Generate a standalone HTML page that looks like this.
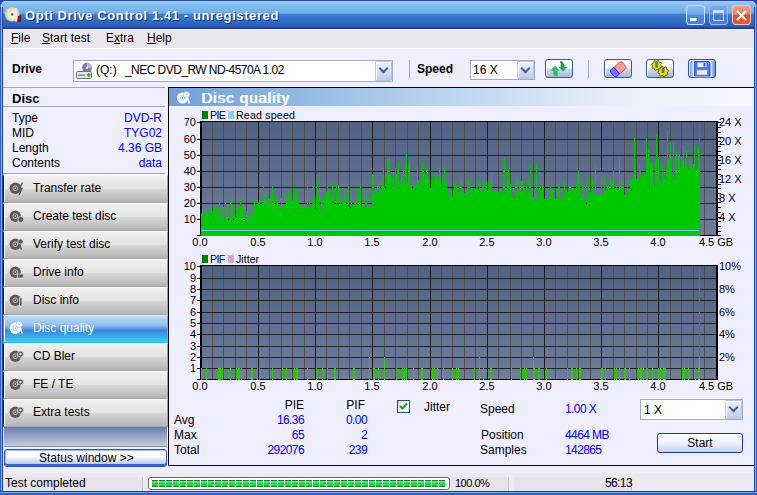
<!DOCTYPE html><html><head><meta charset="utf-8"><style>
*{margin:0;padding:0;box-sizing:border-box}
html,body{width:757px;height:495px;overflow:hidden;background:#ffffff}
body{font-family:"Liberation Sans",sans-serif;font-size:12px;color:#000;position:relative;line-height:14px}
.abs{position:absolute}
.lbl{position:absolute;white-space:nowrap}
#win{position:absolute;left:0;top:0;width:757px;height:495px;background:#2048a8;overflow:hidden}
#title{position:absolute;left:0;top:0;width:757px;height:29px;border-radius:8px 8px 0 0;
 background:linear-gradient(to bottom,#2a4aa0 0px,#2a4aa0 1px,#a4d0f6 1px,#8cc4f2 3px,#72b0ec 12px,#62a0e4 13.5px,#3a80d4 14px,#2f6cc6 21px,#2a5cb8 27px,#1a3a94 28px,#1a3a94 29px)}
#ttext{position:absolute;left:25px;top:9px;font-weight:bold;font-size:13px;color:#fff;letter-spacing:0.6px;text-shadow:1px 1px 0 #102c80;white-space:nowrap}
.wbtn{position:absolute;top:5px;width:19px;height:20px;border-radius:3px;border:1px solid #f0f4ff}
#lb{position:absolute;left:0;top:7px;width:3px;height:488px;background:linear-gradient(to right,#3060c8 0,#3060c8 1px,#80b0e8 1px,#80b0e8 2px,#2048a0 2px)}
#rb{position:absolute;left:754px;top:7px;width:3px;height:488px;background:linear-gradient(to right,#1e48a0 0,#1e48a0 1px,#80b0e8 1px,#80b0e8 2px,#3060c8 2px)}
#bb{position:absolute;left:0;top:491px;width:757px;height:4px;background:linear-gradient(#203c98 0,#203c98 1px,#7aaae8 1px,#7aaae8 2px,#3060c8 2px)}
#client{position:absolute;left:3px;top:29px;width:751px;height:462px;background:#efeeff}
#menu{position:absolute;left:3px;top:29px;width:751px;height:20px;background:#eae8ec;border-top:1px solid #f6f4f4;border-bottom:1px solid #ffffff}
.mi{position:absolute;top:31px;white-space:nowrap}
.u{text-decoration:underline;text-underline-offset:1px}
.combo{position:absolute;background:#fff;border:1px solid #a5acb5}
.dd{position:absolute;top:0;right:0;width:17px;bottom:0;background:linear-gradient(#eef4fe 0%,#d8e4f8 40%,#bccfeb 100%);border:1px solid #b8c8e4;box-shadow:inset 1px 1px 0 #fff;border-radius:1px}
.dd:after{content:"";position:absolute;left:3.5px;top:2.5px;width:5px;height:5px;border-right:2px solid #4d6185;border-bottom:2px solid #4d6185;transform:rotate(45deg)}
.tb{position:absolute;top:59px;width:28px;height:19px;border:1px solid #3a5a90;border-radius:3px;background:linear-gradient(#ffffff 0%,#f4f8fc 45%,#cfdaea 55%,#a8b8d4 100%);box-shadow:inset 1px 1px 0 #fff}
.tb svg{position:absolute;left:0;top:0}
.sep{position:absolute;width:1px;background:#a8a8b0}
.hline{position:absolute;height:1px}
.sb{position:absolute;left:3px;width:165px;height:28px;border-top:1px solid #fafafa;border-bottom:1px solid #a4a4a4;border-left:1px solid #1a1a1a;border-right:1px solid #a0a0a0;box-shadow:inset 1px 0 0 #ffffff;
 background:linear-gradient(#f0f0f0 0%,#e4e4e4 48%,#d6d6d6 52%,#b6b6b6 100%)}
.sb.sel{background:linear-gradient(#c0dcf8 0%,#90bef0 35%,#5a96e0 50%,#3a84d8 55%,#30d4fa 100%);color:#fff;border-top-color:#d8ecff;border-bottom-color:#28b8ec;border-left-color:#4a88d0}
.sb .ic{position:absolute;left:5px;top:5px;width:16px;height:15px}
.sb .ic svg{display:block}
.sb .sbt{position:absolute;left:29px;top:5px;white-space:nowrap}
.yl{position:absolute;left:150px;width:46px;text-align:right;font-size:11px;line-height:14px}
.yr{position:absolute;left:719px;font-size:11px;line-height:14px;white-space:nowrap}
.xl{position:absolute;width:60px;text-align:center;font-size:11px;line-height:14px}
.blue{color:#0000ff}
.num{letter-spacing:-0.6px}
.leg{position:absolute;font-size:10.7px;line-height:12px;white-space:nowrap}
.sbar{position:absolute;top:477px;height:14px;background:#e6e4e8;border-right:1px solid #c8c8cc}
</style></head><body><div id="win"><div id="title"></div><div id="client"></div><div id="lb"></div><div id="rb"></div><div id="bb"></div></div><svg class="abs" style="left:4px;top:6px" width="18" height="18" viewBox="0 0 18 18"><circle cx="8.2" cy="8.4" r="7.2" fill="#e6d49a"/><circle cx="8.2" cy="8.4" r="5" fill="#f2e8c0"/><circle cx="8.2" cy="8.4" r="2.6" fill="#f8f8f0"/><circle cx="8.2" cy="8.4" r="1.3" fill="#2e6cd0"/><path d="M10.5 2.5 L13 2 L13 15.5 L10.8 15.5 Z" fill="#e8e8e8"/><rect x="13.8" y="10" width="2" height="6" fill="#a00808"/><rect x="15.8" y="9" width="1" height="7" fill="#302020"/></svg><div id="ttext">Opti Drive Control 1.41 - unregistered</div><div class="wbtn" style="left:686px;border-color:#d0e2fa;background:linear-gradient(#8cbcf4 0%,#74a8ee 45%,#4f88e0 52%,#4a80dc 100%)"><div class="abs" style="left:3px;top:12px;width:7px;height:3px;background:#fff"></div></div><div class="wbtn" style="left:709px;border-color:#9cbcec;background:linear-gradient(#78a8ec 0%,#6898e4 45%,#4278d4 52%,#4a7cd0 100%)"><div class="abs" style="left:3px;top:4px;width:11px;height:11px;border:1px solid #c8dcf8;border-top-width:3px"></div></div><div class="wbtn" style="left:732px;border-color:#f4c8b8;background:linear-gradient(#eca080 0%,#e4866a 45%,#d85428 52%,#dc6038 100%)"><svg class="abs" style="left:3px;top:4px" width="11" height="11" viewBox="0 0 11 11"><path d="M1 1L10 10M10 1L1 10" stroke="#fff" stroke-width="2"/></svg></div><div id="menu"></div><div class="mi" style="left:11px"><span class="u">F</span>ile</div><div class="mi" style="left:42px"><span class="u">S</span>tart test</div><div class="mi" style="left:106px">E<span class="u">x</span>tra</div><div class="mi" style="left:147px"><span class="u">H</span>elp</div><div class="lbl" style="left:12px;top:62px;font-weight:bold">Drive</div><div class="combo" style="left:73px;top:60px;width:320px;height:22px"><div class="dd"></div></div><svg class="abs" style="left:75px;top:62px" width="18" height="18" viewBox="0 0 18 18"><circle cx="12" cy="5.8" r="5" fill="#8878b8"/><path d="M12 0.8 A5 5 0 0 1 17 5.8 L12 5.8Z" fill="#c0b4e4"/><circle cx="12" cy="5.8" r="1.2" fill="#fff"/><rect x="1.5" y="9.5" width="15" height="7" rx="1" fill="#e4e4e4" stroke="#707070" stroke-width="1"/><rect x="3" y="12.5" width="7" height="1.5" fill="#909090"/><path d="M13 11 h1.5 v1.2 h1.2 v1.5 h-1.2 v1.2 h-1.5 v-1.2 h-1.2 v-1.5 h1.2z" fill="#10c010"/></svg><div class="lbl" style="left:96px;top:63px">(Q:)</div><div class="lbl" style="left:125px;top:63px;letter-spacing:-0.55px">_NEC DVD_RW ND-4570A 1.02</div><div class="sep" style="left:409px;top:60px;height:18px"></div><div class="lbl" style="left:417px;top:62px;font-weight:bold">Speed</div><div class="combo" style="left:470px;top:60px;width:65px;height:20px"><div class="dd"></div></div><div class="lbl" style="left:473px;top:63px">16 X</div><div class="sep" style="left:588px;top:60px;height:18px"></div><div class="tb" style="left:545px"><svg width="28" height="19" viewBox="0 0 28 19"><path d="M4.6 10.8 L9 5.5 L13.4 10.8 L11.3 10.8 L11.9 16 L7.9 16 L7.1 10.8 Z" fill="#2cbc6c"/><path d="M12.6 7 L21.4 7 L17 11.8 Z" fill="#22ac5c"/><path d="M14.6 7.2 L18.6 7.2 Q18.6 3 15 0.8 L13.8 1.8 Q15.4 4 14.6 7.2 Z" fill="#1c9850"/></svg></div><div class="tb" style="left:604px"><svg width="28" height="19" viewBox="0 0 28 19"><g transform="translate(13.6 9) rotate(-40)"><rect x="-2.5" y="-4.4" width="9.6" height="8.8" rx="1.8" fill="#ff9c9c" stroke="#ff3a3a" stroke-width="0.9"/><path d="M-2.5 -4.4 L-6.3 -4.4 Q-8.2 -4.4 -8.2 -2.5 L-8.2 2.5 Q-8.2 4.4 -6.3 4.4 L-2.5 4.4 Z" fill="#7474f4" stroke="#2424ff" stroke-width="0.9"/></g></svg></div><div class="tb" style="left:646px"><svg width="28" height="19" viewBox="0 0 28 19"><path d="M14.90 6.43 L14.60 7.41 L13.20 7.69 L12.69 8.31 L12.67 9.73 L11.77 10.21 L10.59 9.42 L9.79 9.50 L8.77 10.50 L7.79 10.20 L7.51 8.80 L6.89 8.29 L5.47 8.27 L4.99 7.37 L5.78 6.19 L5.70 5.39 L4.70 4.37 L5.00 3.39 L6.40 3.11 L6.91 2.49 L6.93 1.07 L7.83 0.59 L9.01 1.38 L9.81 1.30 L10.83 0.30 L11.81 0.60 L12.09 2.00 L12.71 2.51 L14.13 2.53 L14.61 3.43 L13.82 4.61 L13.90 5.41Z" fill="#e4e400" stroke="#3a3a00" stroke-width="0.7"/><path d="M20.94 14.19 L20.34 15.06 L18.90 14.95 L18.19 15.41 L17.72 16.78 L16.68 16.98 L15.74 15.88 L14.91 15.70 L13.61 16.34 L12.74 15.74 L12.85 14.30 L12.39 13.59 L11.02 13.12 L10.82 12.08 L11.92 11.14 L12.10 10.31 L11.46 9.01 L12.06 8.14 L13.50 8.25 L14.21 7.79 L14.68 6.42 L15.72 6.22 L16.66 7.32 L17.49 7.50 L18.79 6.86 L19.66 7.46 L19.55 8.90 L20.01 9.61 L21.38 10.08 L21.58 11.12 L20.48 12.06 L20.30 12.89Z" fill="#e4e400" stroke="#3a3a00" stroke-width="0.7"/><rect x="8.3" y="1.5" width="2.6" height="6" fill="#6a6a90"/><rect x="14.8" y="7.5" width="2.6" height="5.5" fill="#6a6a90"/></svg></div><div class="tb" style="left:688px;border-color:#2050c0;background:linear-gradient(to right,#5a86e0 0%,#fff 22%,#fff 78%,#5a86e0 100%)"><svg width="28" height="19" viewBox="0 0 28 19"><rect x="4" y="0.3" width="18.5" height="17" rx="2" fill="#ffffff"/><path d="M5.5 1.5 H19.5 L21 3 V16 H5.5 Z" fill="#4a7cf4" stroke="#1050e8" stroke-width="1"/><rect x="8.5" y="2.5" width="9" height="4.5" fill="#f2eee0"/><rect x="14.5" y="3" width="2" height="3.5" fill="#2050e8"/><rect x="7" y="9.5" width="12" height="6" fill="#948c7c"/><rect x="8" y="10.3" width="10" height="4.4" fill="#eeeeee"/></svg></div><div class="hline" style="left:3px;top:87px;width:162px;background:#a8a8ac"></div><div class="lbl" style="left:12px;top:92px;font-weight:bold;font-size:13px">Disc</div><div class="hline" style="left:3px;top:106px;width:162px;background:#a8a8ac"></div><div class="lbl" style="left:12px;top:111px">Type</div><div class="lbl blue" style="left:60px;width:102px;text-align:right;top:111px">DVD-R</div><div class="lbl" style="left:12px;top:126px">MID</div><div class="lbl blue" style="left:60px;width:102px;text-align:right;top:126px">TYG02</div><div class="lbl" style="left:12px;top:141px">Length</div><div class="lbl blue" style="left:60px;width:102px;text-align:right;top:141px">4.36 GB</div><div class="lbl" style="left:12px;top:156px">Contents</div><div class="lbl blue" style="left:60px;width:102px;text-align:right;top:156px">data</div><div class="hline" style="left:3px;top:173px;width:162px;background:#a8a8ac"></div><div class="sb" style="top:175px"><span class="ic"><svg width="16" height="15" viewBox="0 0 16 15"><circle cx="6.3" cy="7.2" r="5.7" fill="#5a5a5a"/><circle cx="6.3" cy="7.2" r="2.4" fill="none" stroke="#bdbdbd" stroke-width="1"/><circle cx="6.3" cy="7.2" r="0.9" fill="#bdbdbd"/><path d="M13.5 1.5 L10.5 7.5 L13 7.5 L10 14" stroke="#5a5a5a" stroke-width="1.4" fill="none"/></svg></span><span class="sbt">Transfer rate</span></div><div class="sb" style="top:203px"><span class="ic"><svg width="16" height="15" viewBox="0 0 16 15"><circle cx="6.3" cy="7.2" r="5.7" fill="#5a5a5a"/><circle cx="6.3" cy="7.2" r="2.4" fill="none" stroke="#bdbdbd" stroke-width="1"/><circle cx="6.3" cy="7.2" r="0.9" fill="#bdbdbd"/><circle cx="11.8" cy="10.5" r="3" fill="#5a5a5a" stroke="#dcdcdc" stroke-width="0.8"/></svg></span><span class="sbt">Create test disc</span></div><div class="sb" style="top:231px"><span class="ic"><svg width="16" height="15" viewBox="0 0 16 15"><circle cx="6.3" cy="7.2" r="5.7" fill="#5a5a5a"/><circle cx="6.3" cy="7.2" r="2.4" fill="none" stroke="#bdbdbd" stroke-width="1"/><circle cx="6.3" cy="7.2" r="0.9" fill="#bdbdbd"/><circle cx="11.5" cy="4.5" r="2.6" fill="#5a5a5a" stroke="#dcdcdc" stroke-width="0.8"/><path d="M10.5 8 L12.5 12.5" stroke="#5a5a5a" stroke-width="1.6"/></svg></span><span class="sbt">Verify test disc</span></div><div class="sb" style="top:259px"><span class="ic"><svg width="16" height="15" viewBox="0 0 16 15"><circle cx="6.3" cy="7.2" r="5.7" fill="#5a5a5a"/><circle cx="6.3" cy="7.2" r="2.4" fill="none" stroke="#bdbdbd" stroke-width="1"/><circle cx="6.3" cy="7.2" r="0.9" fill="#bdbdbd"/><rect x="8.5" y="9" width="6" height="4" fill="#5a5a5a" stroke="#dcdcdc" stroke-width="0.8"/></svg></span><span class="sbt">Drive info</span></div><div class="sb" style="top:287px"><span class="ic"><svg width="16" height="15" viewBox="0 0 16 15"><circle cx="6.3" cy="7.2" r="5.7" fill="#5a5a5a"/><circle cx="6.3" cy="7.2" r="2.4" fill="none" stroke="#bdbdbd" stroke-width="1"/><circle cx="6.3" cy="7.2" r="0.9" fill="#bdbdbd"/><rect x="10.5" y="5" width="2.5" height="8" fill="#5a5a5a" stroke="#dcdcdc" stroke-width="0.8"/></svg></span><span class="sbt">Disc info</span></div><div class="sb sel" style="top:315px"><span class="ic"><svg width="16" height="15" viewBox="0 0 16 15"><circle cx="6.3" cy="7.2" r="5.7" fill="#ffffff"/><circle cx="6.3" cy="7.2" r="2.4" fill="none" stroke="#9cc4f0" stroke-width="1"/><circle cx="6.3" cy="7.2" r="0.9" fill="#9cc4f0"/><path d="M10.8 6 L13.3 12.5" stroke="#ffffff" stroke-width="1.8"/><circle cx="10.3" cy="3.5" r="3.1" fill="#ffffff" stroke="#9cc4f0" stroke-width="0.6"/><path d="M8.6 3.5 L9.6 2.5 L10.6 4 L11.6 2.5" stroke="#9cc4f0" stroke-width="0.7" fill="none"/></svg></span><span class="sbt">Disc quality</span></div><div class="sb" style="top:343px"><span class="ic"><svg width="16" height="15" viewBox="0 0 16 15"><circle cx="6.3" cy="7.2" r="5.7" fill="#5a5a5a"/><circle cx="6.3" cy="7.2" r="2.4" fill="none" stroke="#bdbdbd" stroke-width="1"/><circle cx="6.3" cy="7.2" r="0.9" fill="#bdbdbd"/><circle cx="11.5" cy="5" r="3" fill="#5a5a5a" stroke="#dcdcdc" stroke-width="0.8"/><circle cx="11.5" cy="5" r="1.2" fill="#dcdcdc"/></svg></span><span class="sbt">CD Bler</span></div><div class="sb" style="top:371px"><span class="ic"><svg width="16" height="15" viewBox="0 0 16 15"><circle cx="6.3" cy="7.2" r="5.7" fill="#5a5a5a"/><circle cx="6.3" cy="7.2" r="2.4" fill="none" stroke="#bdbdbd" stroke-width="1"/><circle cx="6.3" cy="7.2" r="0.9" fill="#bdbdbd"/><circle cx="11.5" cy="5" r="3" fill="#5a5a5a" stroke="#dcdcdc" stroke-width="0.8"/><circle cx="11.5" cy="5" r="1.2" fill="#dcdcdc"/></svg></span><span class="sbt">FE / TE</span></div><div class="sb" style="top:399px"><span class="ic"><svg width="16" height="15" viewBox="0 0 16 15"><circle cx="6.3" cy="7.2" r="5.7" fill="#5a5a5a"/><circle cx="6.3" cy="7.2" r="2.4" fill="none" stroke="#bdbdbd" stroke-width="1"/><circle cx="6.3" cy="7.2" r="0.9" fill="#bdbdbd"/><circle cx="11.5" cy="5" r="3" fill="#5a5a5a" stroke="#dcdcdc" stroke-width="0.8"/><circle cx="11.5" cy="5" r="1.2" fill="#dcdcdc"/></svg></span><span class="sbt">Extra tests</span></div><div class="abs" style="left:4px;top:427px;width:163px;height:19px;background:linear-gradient(#6a7cb0,#c4cae2)"></div><div class="hline" style="left:4px;top:446px;width:163px;background:#909098"></div><div class="abs" style="left:4px;top:449px;width:163px;height:18px;border:1px solid #2a56bc;border-radius:3px;background:linear-gradient(#ffffff 0%,#ffffff 40%,#dce6f4 60%,#a8c0e4 100%);box-shadow:inset 0 -2px 0 #3a68c8, inset 1px 1px 0 #9cc0f0"></div><div class="lbl" style="left:39px;top:451px">Status window &gt;&gt;</div><div class="abs" style="left:168px;top:87px;width:586px;height:379px;border:1px solid #000;border-right:none"></div><div class="abs" style="left:169px;top:88px;width:583px;height:18px;background:linear-gradient(to right,#6ea0d8,#a8c8ea 35%,#e6eef8 75%,#f6f8fe)"></div><svg class="abs" style="left:176px;top:91px" width="16" height="15" viewBox="0 0 16 15"><circle cx="6.5" cy="7" r="5.6" fill="#fff"/><circle cx="6.5" cy="7" r="2.2" fill="none" stroke="#8ab8e8" stroke-width="0.9"/><circle cx="6.5" cy="7" r="0.9" fill="#6aa0dc"/><path d="M11 6 L13.5 12.5" stroke="#fff" stroke-width="1.8"/><circle cx="10.5" cy="3.5" r="3.1" fill="#fff" stroke="#8ab8e8" stroke-width="0.6"/><path d="M8.8 3.5 L9.8 2.5 L10.8 4 L11.8 2.5" stroke="#9cc4ec" stroke-width="0.7" fill="none"/></svg><div class="lbl" style="left:201px;top:89px;font-size:15px;line-height:18px;color:#fff;letter-spacing:1px;text-shadow:1px 0 0 #fff">Disc quality</div><div class="abs" style="left:202px;top:111px;width:6px;height:8px;background:#008000"></div><div class="leg" style="left:210px;top:109px;letter-spacing:-0.7px">PIE</div><div class="abs" style="left:228px;top:111px;width:6px;height:8px;background:#87cefa"></div><div class="leg" style="left:236px;top:109px;letter-spacing:0.15px">Read speed</div><div class="abs" style="left:202px;top:255px;width:6px;height:8px;background:#008000"></div><div class="leg" style="left:210px;top:253px;letter-spacing:-0.7px">PIF</div><div class="abs" style="left:228px;top:255px;width:6px;height:8px;background:#d8a0d8"></div><div class="leg" style="left:236px;top:253px">Jitter</div><svg width="757" height="495" viewBox="0 0 757 495" style="position:absolute;left:0;top:0" shape-rendering="crispEdges"><defs><linearGradient id="pg" x1="0" y1="0" x2="0" y2="1"><stop offset="0" stop-color="#516181"/><stop offset="1" stop-color="#6e7d9c"/></linearGradient></defs><rect x="202" y="122" width="514" height="113" fill="url(#pg)"/><rect x="212" y="122" width="1" height="113" fill="#505050"/><rect x="223" y="122" width="1" height="113" fill="#505050"/><rect x="235" y="122" width="1" height="113" fill="#505050"/><rect x="246" y="122" width="1" height="113" fill="#505050"/><rect x="258" y="122" width="1" height="113" fill="#1e1e1e"/><rect x="269" y="122" width="1" height="113" fill="#505050"/><rect x="281" y="122" width="1" height="113" fill="#505050"/><rect x="292" y="122" width="1" height="113" fill="#505050"/><rect x="304" y="122" width="1" height="113" fill="#505050"/><rect x="315" y="122" width="1" height="113" fill="#1e1e1e"/><rect x="326" y="122" width="1" height="113" fill="#505050"/><rect x="338" y="122" width="1" height="113" fill="#505050"/><rect x="349" y="122" width="1" height="113" fill="#505050"/><rect x="361" y="122" width="1" height="113" fill="#505050"/><rect x="372" y="122" width="1" height="113" fill="#1e1e1e"/><rect x="384" y="122" width="1" height="113" fill="#505050"/><rect x="395" y="122" width="1" height="113" fill="#505050"/><rect x="407" y="122" width="1" height="113" fill="#505050"/><rect x="418" y="122" width="1" height="113" fill="#505050"/><rect x="430" y="122" width="1" height="113" fill="#1e1e1e"/><rect x="441" y="122" width="1" height="113" fill="#505050"/><rect x="452" y="122" width="1" height="113" fill="#505050"/><rect x="464" y="122" width="1" height="113" fill="#505050"/><rect x="475" y="122" width="1" height="113" fill="#505050"/><rect x="487" y="122" width="1" height="113" fill="#1e1e1e"/><rect x="498" y="122" width="1" height="113" fill="#505050"/><rect x="510" y="122" width="1" height="113" fill="#505050"/><rect x="521" y="122" width="1" height="113" fill="#505050"/><rect x="533" y="122" width="1" height="113" fill="#505050"/><rect x="544" y="122" width="1" height="113" fill="#1e1e1e"/><rect x="555" y="122" width="1" height="113" fill="#505050"/><rect x="567" y="122" width="1" height="113" fill="#505050"/><rect x="578" y="122" width="1" height="113" fill="#505050"/><rect x="590" y="122" width="1" height="113" fill="#505050"/><rect x="601" y="122" width="1" height="113" fill="#1e1e1e"/><rect x="613" y="122" width="1" height="113" fill="#505050"/><rect x="624" y="122" width="1" height="113" fill="#505050"/><rect x="636" y="122" width="1" height="113" fill="#505050"/><rect x="647" y="122" width="1" height="113" fill="#505050"/><rect x="658" y="122" width="1" height="113" fill="#1e1e1e"/><rect x="670" y="122" width="1" height="113" fill="#505050"/><rect x="681" y="122" width="1" height="113" fill="#505050"/><rect x="693" y="122" width="1" height="113" fill="#505050"/><rect x="704" y="122" width="1" height="113" fill="#505050"/><rect x="202" y="139" width="514" height="1" fill="#222222"/><rect x="202" y="155" width="514" height="1" fill="#222222"/><rect x="202" y="171" width="514" height="1" fill="#222222"/><rect x="202" y="187" width="514" height="1" fill="#222222"/><rect x="202" y="203" width="514" height="1" fill="#222222"/><rect x="202" y="219" width="514" height="1" fill="#222222"/><rect x="202" y="266" width="514" height="113" fill="url(#pg)"/><rect x="212" y="266" width="1" height="113" fill="#505050"/><rect x="223" y="266" width="1" height="113" fill="#505050"/><rect x="235" y="266" width="1" height="113" fill="#505050"/><rect x="246" y="266" width="1" height="113" fill="#505050"/><rect x="258" y="266" width="1" height="113" fill="#1e1e1e"/><rect x="269" y="266" width="1" height="113" fill="#505050"/><rect x="281" y="266" width="1" height="113" fill="#505050"/><rect x="292" y="266" width="1" height="113" fill="#505050"/><rect x="304" y="266" width="1" height="113" fill="#505050"/><rect x="315" y="266" width="1" height="113" fill="#1e1e1e"/><rect x="326" y="266" width="1" height="113" fill="#505050"/><rect x="338" y="266" width="1" height="113" fill="#505050"/><rect x="349" y="266" width="1" height="113" fill="#505050"/><rect x="361" y="266" width="1" height="113" fill="#505050"/><rect x="372" y="266" width="1" height="113" fill="#1e1e1e"/><rect x="384" y="266" width="1" height="113" fill="#505050"/><rect x="395" y="266" width="1" height="113" fill="#505050"/><rect x="407" y="266" width="1" height="113" fill="#505050"/><rect x="418" y="266" width="1" height="113" fill="#505050"/><rect x="430" y="266" width="1" height="113" fill="#1e1e1e"/><rect x="441" y="266" width="1" height="113" fill="#505050"/><rect x="452" y="266" width="1" height="113" fill="#505050"/><rect x="464" y="266" width="1" height="113" fill="#505050"/><rect x="475" y="266" width="1" height="113" fill="#505050"/><rect x="487" y="266" width="1" height="113" fill="#1e1e1e"/><rect x="498" y="266" width="1" height="113" fill="#505050"/><rect x="510" y="266" width="1" height="113" fill="#505050"/><rect x="521" y="266" width="1" height="113" fill="#505050"/><rect x="533" y="266" width="1" height="113" fill="#505050"/><rect x="544" y="266" width="1" height="113" fill="#1e1e1e"/><rect x="555" y="266" width="1" height="113" fill="#505050"/><rect x="567" y="266" width="1" height="113" fill="#505050"/><rect x="578" y="266" width="1" height="113" fill="#505050"/><rect x="590" y="266" width="1" height="113" fill="#505050"/><rect x="601" y="266" width="1" height="113" fill="#1e1e1e"/><rect x="613" y="266" width="1" height="113" fill="#505050"/><rect x="624" y="266" width="1" height="113" fill="#505050"/><rect x="636" y="266" width="1" height="113" fill="#505050"/><rect x="647" y="266" width="1" height="113" fill="#505050"/><rect x="658" y="266" width="1" height="113" fill="#1e1e1e"/><rect x="670" y="266" width="1" height="113" fill="#505050"/><rect x="681" y="266" width="1" height="113" fill="#505050"/><rect x="693" y="266" width="1" height="113" fill="#505050"/><rect x="704" y="266" width="1" height="113" fill="#505050"/><rect x="202" y="278" width="514" height="1" fill="#222222"/><rect x="202" y="289" width="514" height="1" fill="#222222"/><rect x="202" y="300" width="514" height="1" fill="#222222"/><rect x="202" y="312" width="514" height="1" fill="#222222"/><rect x="202" y="323" width="514" height="1" fill="#222222"/><rect x="202" y="334" width="514" height="1" fill="#222222"/><rect x="202" y="346" width="514" height="1" fill="#222222"/><rect x="202" y="357" width="514" height="1" fill="#222222"/><rect x="202" y="368" width="514" height="1" fill="#222222"/><rect x="200" y="121" width="518" height="1" fill="#000"/><rect x="200" y="121" width="2" height="115" fill="#000"/><rect x="716" y="121" width="2" height="115" fill="#000"/><rect x="200" y="265" width="518" height="1" fill="#000"/><rect x="200" y="265" width="2" height="115" fill="#000"/><rect x="716" y="265" width="2" height="115" fill="#000"/><rect x="202" y="235" width="514" height="1" fill="#000"/><rect x="202" y="379" width="514" height="1" fill="#000"/><path d="M201 213h1v23h-1zM202 213h1v23h-1zM203 214h1v22h-1zM204 214h1v22h-1zM205 213h1v23h-1zM206 213h1v23h-1zM207 209h1v27h-1zM208 208h1v28h-1zM209 215h1v21h-1zM210 214h1v22h-1zM211 213h1v23h-1zM212 211h1v25h-1zM213 212h1v24h-1zM214 205h1v31h-1zM215 212h1v24h-1zM216 207h1v29h-1zM217 214h1v22h-1zM218 217h1v19h-1zM219 203h1v33h-1zM220 207h1v29h-1zM221 217h1v19h-1zM222 217h1v19h-1zM223 207h1v29h-1zM224 209h1v27h-1zM225 203h1v33h-1zM226 219h1v17h-1zM227 219h1v17h-1zM228 220h1v16h-1zM229 208h1v28h-1zM230 200h1v36h-1zM231 219h1v17h-1zM232 218h1v18h-1zM233 221h1v15h-1zM234 206h1v30h-1zM235 217h1v19h-1zM236 213h1v23h-1zM237 218h1v18h-1zM238 206h1v30h-1zM239 206h1v30h-1zM240 200h1v36h-1zM241 205h1v31h-1zM242 208h1v28h-1zM243 222h1v14h-1zM244 221h1v15h-1zM245 213h1v23h-1zM246 211h1v25h-1zM247 215h1v21h-1zM248 218h1v18h-1zM249 205h1v31h-1zM250 218h1v18h-1zM251 215h1v21h-1zM252 212h1v24h-1zM253 212h1v24h-1zM254 200h1v36h-1zM255 215h1v21h-1zM256 204h1v32h-1zM257 210h1v26h-1zM258 202h1v34h-1zM259 189h1v47h-1zM260 206h1v30h-1zM261 207h1v29h-1zM262 200h1v36h-1zM263 185h1v51h-1zM264 194h1v42h-1zM265 193h1v43h-1zM266 202h1v34h-1zM267 199h1v37h-1zM268 203h1v33h-1zM269 199h1v37h-1zM270 194h1v42h-1zM271 194h1v42h-1zM272 187h1v49h-1zM273 203h1v33h-1zM274 203h1v33h-1zM275 207h1v29h-1zM276 196h1v40h-1zM277 196h1v40h-1zM278 206h1v30h-1zM279 208h1v28h-1zM280 210h1v26h-1zM281 198h1v38h-1zM282 206h1v30h-1zM283 205h1v31h-1zM284 204h1v32h-1zM285 204h1v32h-1zM286 196h1v40h-1zM287 199h1v37h-1zM288 190h1v46h-1zM289 201h1v35h-1zM290 201h1v35h-1zM291 202h1v34h-1zM292 200h1v36h-1zM293 196h1v40h-1zM294 188h1v48h-1zM295 194h1v42h-1zM296 192h1v44h-1zM297 201h1v35h-1zM298 202h1v34h-1zM299 206h1v30h-1zM300 206h1v30h-1zM301 205h1v31h-1zM302 209h1v27h-1zM303 208h1v28h-1zM304 204h1v32h-1zM305 206h1v30h-1zM306 208h1v28h-1zM307 179h1v57h-1zM308 206h1v30h-1zM309 194h1v42h-1zM310 207h1v29h-1zM311 209h1v27h-1zM312 200h1v36h-1zM313 184h1v52h-1zM314 196h1v40h-1zM315 210h1v26h-1zM316 179h1v57h-1zM317 213h1v23h-1zM318 197h1v39h-1zM319 213h1v23h-1zM320 210h1v26h-1zM321 195h1v41h-1zM322 199h1v37h-1zM323 207h1v29h-1zM324 196h1v40h-1zM325 207h1v29h-1zM326 192h1v44h-1zM327 187h1v49h-1zM328 190h1v46h-1zM329 204h1v32h-1zM330 196h1v40h-1zM331 206h1v30h-1zM332 183h1v53h-1zM333 196h1v40h-1zM334 204h1v32h-1zM335 206h1v30h-1zM336 186h1v50h-1zM337 206h1v30h-1zM338 185h1v51h-1zM339 206h1v30h-1zM340 203h1v33h-1zM341 205h1v31h-1zM342 201h1v35h-1zM343 203h1v33h-1zM344 194h1v42h-1zM345 203h1v33h-1zM346 204h1v32h-1zM347 207h1v29h-1zM348 187h1v49h-1zM349 209h1v27h-1zM350 208h1v28h-1zM351 193h1v43h-1zM352 205h1v31h-1zM353 206h1v30h-1zM354 201h1v35h-1zM355 194h1v42h-1zM356 204h1v32h-1zM357 202h1v34h-1zM358 188h1v48h-1zM359 204h1v32h-1zM360 185h1v51h-1zM361 207h1v29h-1zM362 206h1v30h-1zM363 208h1v28h-1zM364 208h1v28h-1zM365 201h1v35h-1zM366 194h1v42h-1zM367 209h1v27h-1zM368 207h1v29h-1zM369 207h1v29h-1zM370 208h1v28h-1zM371 207h1v29h-1zM372 174h1v62h-1zM373 175h1v61h-1zM374 193h1v43h-1zM375 194h1v42h-1zM376 190h1v46h-1zM377 184h1v52h-1zM378 194h1v42h-1zM379 180h1v56h-1zM380 188h1v48h-1zM381 178h1v58h-1zM382 179h1v57h-1zM383 168h1v68h-1zM384 187h1v49h-1zM385 190h1v46h-1zM386 176h1v60h-1zM387 158h1v78h-1zM388 159h1v77h-1zM389 157h1v79h-1zM390 174h1v62h-1zM391 187h1v49h-1zM392 177h1v59h-1zM393 174h1v62h-1zM394 187h1v49h-1zM395 168h1v68h-1zM396 174h1v62h-1zM397 170h1v66h-1zM398 162h1v74h-1zM399 182h1v54h-1zM400 184h1v52h-1zM401 172h1v64h-1zM402 177h1v59h-1zM403 165h1v71h-1zM404 183h1v53h-1zM405 160h1v76h-1zM406 153h1v83h-1zM407 183h1v53h-1zM408 166h1v70h-1zM409 161h1v75h-1zM410 186h1v50h-1zM411 185h1v51h-1zM412 190h1v46h-1zM413 180h1v56h-1zM414 185h1v51h-1zM415 185h1v51h-1zM416 186h1v50h-1zM417 166h1v70h-1zM418 180h1v56h-1zM419 184h1v52h-1zM420 181h1v55h-1zM421 181h1v55h-1zM422 163h1v73h-1zM423 171h1v65h-1zM424 174h1v62h-1zM425 178h1v58h-1zM426 169h1v67h-1zM427 177h1v59h-1zM428 179h1v57h-1zM429 177h1v59h-1zM430 188h1v48h-1zM431 179h1v57h-1zM432 179h1v57h-1zM433 186h1v50h-1zM434 174h1v62h-1zM435 184h1v52h-1zM436 176h1v60h-1zM437 185h1v51h-1zM438 179h1v57h-1zM439 167h1v69h-1zM440 177h1v59h-1zM441 189h1v47h-1zM442 183h1v53h-1zM443 187h1v49h-1zM444 167h1v69h-1zM445 192h1v44h-1zM446 184h1v52h-1zM447 197h1v39h-1zM448 195h1v41h-1zM449 197h1v39h-1zM450 190h1v46h-1zM451 196h1v40h-1zM452 196h1v40h-1zM453 194h1v42h-1zM454 183h1v53h-1zM455 198h1v38h-1zM456 185h1v51h-1zM457 196h1v40h-1zM458 192h1v44h-1zM459 186h1v50h-1zM460 183h1v53h-1zM461 180h1v56h-1zM462 194h1v42h-1zM463 191h1v45h-1zM464 193h1v43h-1zM465 193h1v43h-1zM466 194h1v42h-1zM467 187h1v49h-1zM468 179h1v57h-1zM469 178h1v58h-1zM470 190h1v46h-1zM471 193h1v43h-1zM472 190h1v46h-1zM473 192h1v44h-1zM474 188h1v48h-1zM475 189h1v47h-1zM476 180h1v56h-1zM477 187h1v49h-1zM478 189h1v47h-1zM479 180h1v56h-1zM480 191h1v45h-1zM481 189h1v47h-1zM482 180h1v56h-1zM483 182h1v54h-1zM484 192h1v44h-1zM485 179h1v57h-1zM486 181h1v55h-1zM487 191h1v45h-1zM488 183h1v53h-1zM489 192h1v44h-1zM490 182h1v54h-1zM491 172h1v64h-1zM492 192h1v44h-1zM493 196h1v40h-1zM494 192h1v44h-1zM495 189h1v47h-1zM496 192h1v44h-1zM497 188h1v48h-1zM498 192h1v44h-1zM499 195h1v41h-1zM500 189h1v47h-1zM501 191h1v45h-1zM502 194h1v42h-1zM503 171h1v65h-1zM504 157h1v79h-1zM505 196h1v40h-1zM506 190h1v46h-1zM507 181h1v55h-1zM508 169h1v67h-1zM509 194h1v42h-1zM510 184h1v52h-1zM511 195h1v41h-1zM512 198h1v38h-1zM513 200h1v36h-1zM514 198h1v38h-1zM515 184h1v52h-1zM516 180h1v56h-1zM517 180h1v56h-1zM518 192h1v44h-1zM519 182h1v54h-1zM520 192h1v44h-1zM521 181h1v55h-1zM522 180h1v56h-1zM523 185h1v51h-1zM524 191h1v45h-1zM525 195h1v41h-1zM526 184h1v52h-1zM527 196h1v40h-1zM528 193h1v43h-1zM529 178h1v58h-1zM530 164h1v72h-1zM531 200h1v36h-1zM532 200h1v36h-1zM533 197h1v39h-1zM534 201h1v35h-1zM535 197h1v39h-1zM536 164h1v72h-1zM537 199h1v37h-1zM538 199h1v37h-1zM539 198h1v38h-1zM540 186h1v50h-1zM541 200h1v36h-1zM542 187h1v49h-1zM543 198h1v38h-1zM544 199h1v37h-1zM545 189h1v47h-1zM546 200h1v36h-1zM547 201h1v35h-1zM548 197h1v39h-1zM549 189h1v47h-1zM550 186h1v50h-1zM551 200h1v36h-1zM552 189h1v47h-1zM553 199h1v37h-1zM554 199h1v37h-1zM555 199h1v37h-1zM556 200h1v36h-1zM557 198h1v38h-1zM558 185h1v51h-1zM559 187h1v49h-1zM560 200h1v36h-1zM561 189h1v47h-1zM562 198h1v38h-1zM563 195h1v41h-1zM564 182h1v54h-1zM565 194h1v42h-1zM566 190h1v46h-1zM567 192h1v44h-1zM568 192h1v44h-1zM569 187h1v49h-1zM570 187h1v49h-1zM571 197h1v39h-1zM572 188h1v48h-1zM573 196h1v40h-1zM574 189h1v47h-1zM575 195h1v41h-1zM576 184h1v52h-1zM577 197h1v39h-1zM578 171h1v65h-1zM579 198h1v38h-1zM580 196h1v40h-1zM581 190h1v46h-1zM582 184h1v52h-1zM583 186h1v50h-1zM584 198h1v38h-1zM585 186h1v50h-1zM586 205h1v31h-1zM587 201h1v35h-1zM588 177h1v59h-1zM589 197h1v39h-1zM590 192h1v44h-1zM591 193h1v43h-1zM592 179h1v57h-1zM593 193h1v43h-1zM594 195h1v41h-1zM595 164h1v72h-1zM596 194h1v42h-1zM597 195h1v41h-1zM598 195h1v41h-1zM599 191h1v45h-1zM600 194h1v42h-1zM601 172h1v64h-1zM602 194h1v42h-1zM603 195h1v41h-1zM604 178h1v58h-1zM605 193h1v43h-1zM606 191h1v45h-1zM607 186h1v50h-1zM608 188h1v48h-1zM609 187h1v49h-1zM610 178h1v58h-1zM611 191h1v45h-1zM612 182h1v54h-1zM613 171h1v65h-1zM614 189h1v47h-1zM615 188h1v48h-1zM616 186h1v50h-1zM617 190h1v46h-1zM618 189h1v47h-1zM619 157h1v79h-1zM620 190h1v46h-1zM621 178h1v58h-1zM622 181h1v55h-1zM623 183h1v53h-1zM624 195h1v41h-1zM625 195h1v41h-1zM626 195h1v41h-1zM627 180h1v56h-1zM628 190h1v46h-1zM629 189h1v47h-1zM630 180h1v56h-1zM631 180h1v56h-1zM632 178h1v58h-1zM633 179h1v57h-1zM634 137h1v99h-1zM635 171h1v65h-1zM636 179h1v57h-1zM637 181h1v55h-1zM638 179h1v57h-1zM639 164h1v72h-1zM640 171h1v65h-1zM641 177h1v59h-1zM642 176h1v60h-1zM643 183h1v53h-1zM644 173h1v63h-1zM645 178h1v58h-1zM646 139h1v97h-1zM647 159h1v77h-1zM648 150h1v86h-1zM649 190h1v46h-1zM650 164h1v72h-1zM651 162h1v74h-1zM652 163h1v73h-1zM653 184h1v52h-1zM654 186h1v50h-1zM655 162h1v74h-1zM656 135h1v101h-1zM657 171h1v65h-1zM658 157h1v79h-1zM659 179h1v57h-1zM660 183h1v53h-1zM661 184h1v52h-1zM662 164h1v72h-1zM663 178h1v58h-1zM664 178h1v58h-1zM665 183h1v53h-1zM666 169h1v67h-1zM667 131h1v105h-1zM668 160h1v76h-1zM669 155h1v81h-1zM670 142h1v94h-1zM671 158h1v78h-1zM672 175h1v61h-1zM673 142h1v94h-1zM674 178h1v58h-1zM675 157h1v79h-1zM676 152h1v84h-1zM677 178h1v58h-1zM678 157h1v79h-1zM679 155h1v81h-1zM680 168h1v68h-1zM681 157h1v79h-1zM682 161h1v75h-1zM683 146h1v90h-1zM684 167h1v69h-1zM685 158h1v78h-1zM686 150h1v86h-1zM687 169h1v67h-1zM688 169h1v67h-1zM689 157h1v79h-1zM690 165h1v71h-1zM691 161h1v75h-1zM692 167h1v69h-1zM693 164h1v72h-1zM694 145h1v91h-1zM695 170h1v66h-1zM696 169h1v67h-1zM697 175h1v61h-1zM698 147h1v89h-1zM699 155h1v81h-1z" fill="#00c800"/><rect x="201" y="230" width="498" height="1" fill="#80ccf0"/><rect x="699" y="122" width="1" height="36" fill="#1a78e8"/><path d="M201 368h1v12h-1zM206 368h1v12h-1zM218 368h1v12h-1zM219 368h1v12h-1zM220 368h1v12h-1zM222 368h1v12h-1zM230 368h1v12h-1zM236 368h1v12h-1zM238 368h1v12h-1zM239 368h1v12h-1zM241 368h1v12h-1zM251 368h1v12h-1zM252 368h1v12h-1zM257 368h1v12h-1zM259 368h1v12h-1zM272 368h1v12h-1zM282 368h1v12h-1zM286 368h1v12h-1zM294 368h1v12h-1zM296 368h1v12h-1zM297 368h1v12h-1zM307 368h1v12h-1zM316 368h1v12h-1zM322 368h1v12h-1zM327 368h1v12h-1zM334 368h1v12h-1zM335 368h1v12h-1zM353 368h1v12h-1zM354 368h1v12h-1zM373 368h1v12h-1zM374 368h1v12h-1zM378 368h1v12h-1zM396 368h1v12h-1zM402 368h1v12h-1zM404 368h1v12h-1zM406 368h1v12h-1zM413 368h1v12h-1zM421 368h1v12h-1zM422 368h1v12h-1zM432 368h1v12h-1zM434 368h1v12h-1zM437 368h1v12h-1zM443 368h1v12h-1zM452 368h1v12h-1zM456 368h1v12h-1zM458 368h1v12h-1zM474 368h1v12h-1zM483 368h1v12h-1zM490 368h1v12h-1zM491 368h1v12h-1zM511 368h1v12h-1zM520 368h1v12h-1zM524 368h1v12h-1zM526 368h1v12h-1zM534 368h1v12h-1zM538 368h1v12h-1zM539 368h1v12h-1zM546 368h1v12h-1zM567 368h1v12h-1zM571 368h1v12h-1zM572 368h1v12h-1zM576 368h1v12h-1zM579 368h1v12h-1zM580 368h1v12h-1zM601 368h1v12h-1zM602 368h1v12h-1zM605 368h1v12h-1zM614 368h1v12h-1zM616 368h1v12h-1zM619 368h1v12h-1zM624 368h1v12h-1zM625 368h1v12h-1zM629 368h1v12h-1zM638 368h1v12h-1zM640 368h1v12h-1zM641 368h1v12h-1zM643 368h1v12h-1zM646 368h1v12h-1zM647 368h1v12h-1zM652 368h1v12h-1zM658 368h1v12h-1zM660 368h1v12h-1zM663 368h1v12h-1zM664 368h1v12h-1zM665 368h1v12h-1zM682 368h1v12h-1zM684 368h1v12h-1zM688 368h1v12h-1zM695 368h1v12h-1zM698 368h1v12h-1zM369 357h1v23h-1zM384 357h1v23h-1zM479 357h1v23h-1zM533 357h1v23h-1zM699 357h1v23h-1z" fill="#30cc00"/><rect x="699" y="266" width="1" height="92" fill="#1a78e8"/><rect x="197" y="235" width="3" height="1" fill="#000"/><rect x="197" y="219" width="3" height="1" fill="#000"/><rect x="197" y="203" width="3" height="1" fill="#000"/><rect x="197" y="187" width="3" height="1" fill="#000"/><rect x="197" y="171" width="3" height="1" fill="#000"/><rect x="197" y="155" width="3" height="1" fill="#000"/><rect x="197" y="139" width="3" height="1" fill="#000"/><rect x="197" y="122" width="3" height="1" fill="#000"/><rect x="197" y="379" width="3" height="1" fill="#000"/><rect x="197" y="368" width="3" height="1" fill="#000"/><rect x="197" y="357" width="3" height="1" fill="#000"/><rect x="197" y="346" width="3" height="1" fill="#000"/><rect x="197" y="334" width="3" height="1" fill="#000"/><rect x="197" y="323" width="3" height="1" fill="#000"/><rect x="197" y="312" width="3" height="1" fill="#000"/><rect x="197" y="300" width="3" height="1" fill="#000"/><rect x="197" y="289" width="3" height="1" fill="#000"/><rect x="197" y="278" width="3" height="1" fill="#000"/><rect x="197" y="266" width="3" height="1" fill="#000"/><rect x="718" y="235" width="3" height="1" fill="#000"/><rect x="718" y="231" width="3" height="1" fill="#000"/><rect x="718" y="226" width="3" height="1" fill="#000"/><rect x="718" y="221" width="3" height="1" fill="#000"/><rect x="718" y="217" width="3" height="1" fill="#000"/><rect x="718" y="212" width="3" height="1" fill="#000"/><rect x="718" y="207" width="3" height="1" fill="#000"/><rect x="718" y="202" width="3" height="1" fill="#000"/><rect x="718" y="198" width="3" height="1" fill="#000"/><rect x="718" y="193" width="3" height="1" fill="#000"/><rect x="718" y="188" width="3" height="1" fill="#000"/><rect x="718" y="184" width="3" height="1" fill="#000"/><rect x="718" y="179" width="3" height="1" fill="#000"/><rect x="718" y="174" width="3" height="1" fill="#000"/><rect x="718" y="169" width="3" height="1" fill="#000"/><rect x="718" y="165" width="3" height="1" fill="#000"/><rect x="718" y="160" width="3" height="1" fill="#000"/><rect x="718" y="155" width="3" height="1" fill="#000"/><rect x="718" y="151" width="3" height="1" fill="#000"/><rect x="718" y="146" width="3" height="1" fill="#000"/><rect x="718" y="141" width="3" height="1" fill="#000"/><rect x="718" y="137" width="3" height="1" fill="#000"/><rect x="718" y="132" width="3" height="1" fill="#000"/><rect x="718" y="127" width="3" height="1" fill="#000"/><rect x="718" y="122" width="3" height="1" fill="#000"/></svg><div class="yl" style="top:115px">70</div><div class="yl" style="top:132px">60</div><div class="yl" style="top:148px">50</div><div class="yl" style="top:164px">40</div><div class="yl" style="top:180px">30</div><div class="yl" style="top:196px">20</div><div class="yl" style="top:212px">10</div><div class="yl" style="top:259px">10</div><div class="yl" style="top:271px">9</div><div class="yl" style="top:282px">8</div><div class="yl" style="top:293px">7</div><div class="yl" style="top:305px">6</div><div class="yl" style="top:316px">5</div><div class="yl" style="top:327px">4</div><div class="yl" style="top:339px">3</div><div class="yl" style="top:350px">2</div><div class="yl" style="top:361px">1</div><div class="yr" style="top:115px">24 X</div><div class="yr" style="top:134px">20 X</div><div class="yr" style="top:153px">16 X</div><div class="yr" style="top:172px">12 X</div><div class="yr" style="top:191px">8 X</div><div class="yr" style="top:210px">4 X</div><div class="yr" style="top:259px">10%</div><div class="yr" style="top:282px">8%</div><div class="yr" style="top:305px">6%</div><div class="yr" style="top:327px">4%</div><div class="yr" style="top:350px">2%</div><div class="xl" style="left:170px;top:235px">0.0</div><div class="xl" style="left:228px;top:235px">0.5</div><div class="xl" style="left:285px;top:235px">1.0</div><div class="xl" style="left:342px;top:235px">1.5</div><div class="xl" style="left:400px;top:235px">2.0</div><div class="xl" style="left:457px;top:235px">2.5</div><div class="xl" style="left:514px;top:235px">3.0</div><div class="xl" style="left:571px;top:235px">3.5</div><div class="xl" style="left:628px;top:235px">4.0</div><div class="xl" style="left:686px;top:235px">4.5 GB</div><div class="xl" style="left:170px;top:379px">0.0</div><div class="xl" style="left:228px;top:379px">0.5</div><div class="xl" style="left:285px;top:379px">1.0</div><div class="xl" style="left:342px;top:379px">1.5</div><div class="xl" style="left:400px;top:379px">2.0</div><div class="xl" style="left:457px;top:379px">2.5</div><div class="xl" style="left:514px;top:379px">3.0</div><div class="xl" style="left:571px;top:379px">3.5</div><div class="xl" style="left:628px;top:379px">4.0</div><div class="xl" style="left:686px;top:379px">4.5 GB</div><div class="lbl" style="left:268px;width:36px;text-align:right;top:398px">PIE</div><div class="lbl" style="left:329px;width:36px;text-align:right;top:398px">PIF</div><div class="lbl" style="left:174px;top:413px">Avg</div><div class="lbl blue num" style="left:242px;width:62px;text-align:right;top:413px">16.36</div><div class="lbl blue num" style="left:313px;width:54px;text-align:right;top:413px">0.00</div><div class="lbl" style="left:174px;top:428px">Max</div><div class="lbl blue num" style="left:242px;width:62px;text-align:right;top:428px">65</div><div class="lbl blue num" style="left:313px;width:54px;text-align:right;top:428px">2</div><div class="lbl" style="left:174px;top:443px">Total</div><div class="lbl blue num" style="left:242px;width:62px;text-align:right;top:443px">292076</div><div class="lbl blue num" style="left:313px;width:54px;text-align:right;top:443px">239</div><div class="abs" style="left:397px;top:400px;width:13px;height:13px;border:1px solid #1c5180;background:linear-gradient(135deg,#dcdcd8,#fff)"></div><svg class="abs" style="left:399px;top:402px" width="9" height="9" viewBox="0 0 9 9"><path d="M1 4 L3.5 6.5 L8 1.5" stroke="#21a121" stroke-width="2" fill="none"/></svg><div class="lbl" style="left:424px;top:400px">Jitter</div><div class="lbl" style="left:480px;top:402px">Speed</div><div class="lbl blue num" style="left:565px;top:402px">1.00 X</div><div class="combo" style="left:640px;top:399px;width:103px;height:21px"><div class="dd"></div></div><div class="lbl" style="left:644px;top:403px">1 X</div><div class="lbl" style="left:481px;top:428px">Position</div><div class="lbl blue num" style="left:565px;top:428px">4464 MB</div><div class="lbl" style="left:480px;top:443px">Samples</div><div class="lbl blue num" style="left:565px;top:443px">142865</div><div class="abs" style="left:657px;top:433px;width:86px;height:20px;border:1px solid #1c3c8c;border-radius:3px;background:linear-gradient(#ffffff,#eef2fa 50%,#c4d2ee)"></div><div class="lbl" style="left:657px;width:86px;text-align:center;top:436px">Start</div><div class="abs" style="left:3px;top:473px;width:751px;height:18px;background:#eceaee"></div><div class="sbar" style="left:4px;width:139px"></div><div class="lbl" style="left:5px;top:476px">Test completed</div><div class="abs" style="left:148px;top:477px;width:302px;height:13px;border:1px solid #686868;border-radius:3px;background:#fff"></div><div class="abs" style="left:152px;top:480px;width:6px;height:7px;background:linear-gradient(#108040 0,#108040 1px,#88d098 1px,#50d060 3px,#10e818 3.5px,#10e818 6px,#108040 6px)"></div><div class="abs" style="left:159px;top:480px;width:6px;height:7px;background:linear-gradient(#108040 0,#108040 1px,#88d098 1px,#50d060 3px,#10e818 3.5px,#10e818 6px,#108040 6px)"></div><div class="abs" style="left:166px;top:480px;width:6px;height:7px;background:linear-gradient(#108040 0,#108040 1px,#88d098 1px,#50d060 3px,#10e818 3.5px,#10e818 6px,#108040 6px)"></div><div class="abs" style="left:173px;top:480px;width:6px;height:7px;background:linear-gradient(#108040 0,#108040 1px,#88d098 1px,#50d060 3px,#10e818 3.5px,#10e818 6px,#108040 6px)"></div><div class="abs" style="left:180px;top:480px;width:6px;height:7px;background:linear-gradient(#108040 0,#108040 1px,#88d098 1px,#50d060 3px,#10e818 3.5px,#10e818 6px,#108040 6px)"></div><div class="abs" style="left:187px;top:480px;width:6px;height:7px;background:linear-gradient(#108040 0,#108040 1px,#88d098 1px,#50d060 3px,#10e818 3.5px,#10e818 6px,#108040 6px)"></div><div class="abs" style="left:194px;top:480px;width:6px;height:7px;background:linear-gradient(#108040 0,#108040 1px,#88d098 1px,#50d060 3px,#10e818 3.5px,#10e818 6px,#108040 6px)"></div><div class="abs" style="left:201px;top:480px;width:6px;height:7px;background:linear-gradient(#108040 0,#108040 1px,#88d098 1px,#50d060 3px,#10e818 3.5px,#10e818 6px,#108040 6px)"></div><div class="abs" style="left:208px;top:480px;width:6px;height:7px;background:linear-gradient(#108040 0,#108040 1px,#88d098 1px,#50d060 3px,#10e818 3.5px,#10e818 6px,#108040 6px)"></div><div class="abs" style="left:215px;top:480px;width:6px;height:7px;background:linear-gradient(#108040 0,#108040 1px,#88d098 1px,#50d060 3px,#10e818 3.5px,#10e818 6px,#108040 6px)"></div><div class="abs" style="left:222px;top:480px;width:6px;height:7px;background:linear-gradient(#108040 0,#108040 1px,#88d098 1px,#50d060 3px,#10e818 3.5px,#10e818 6px,#108040 6px)"></div><div class="abs" style="left:229px;top:480px;width:6px;height:7px;background:linear-gradient(#108040 0,#108040 1px,#88d098 1px,#50d060 3px,#10e818 3.5px,#10e818 6px,#108040 6px)"></div><div class="abs" style="left:236px;top:480px;width:6px;height:7px;background:linear-gradient(#108040 0,#108040 1px,#88d098 1px,#50d060 3px,#10e818 3.5px,#10e818 6px,#108040 6px)"></div><div class="abs" style="left:243px;top:480px;width:6px;height:7px;background:linear-gradient(#108040 0,#108040 1px,#88d098 1px,#50d060 3px,#10e818 3.5px,#10e818 6px,#108040 6px)"></div><div class="abs" style="left:250px;top:480px;width:6px;height:7px;background:linear-gradient(#108040 0,#108040 1px,#88d098 1px,#50d060 3px,#10e818 3.5px,#10e818 6px,#108040 6px)"></div><div class="abs" style="left:257px;top:480px;width:6px;height:7px;background:linear-gradient(#108040 0,#108040 1px,#88d098 1px,#50d060 3px,#10e818 3.5px,#10e818 6px,#108040 6px)"></div><div class="abs" style="left:264px;top:480px;width:6px;height:7px;background:linear-gradient(#108040 0,#108040 1px,#88d098 1px,#50d060 3px,#10e818 3.5px,#10e818 6px,#108040 6px)"></div><div class="abs" style="left:271px;top:480px;width:6px;height:7px;background:linear-gradient(#108040 0,#108040 1px,#88d098 1px,#50d060 3px,#10e818 3.5px,#10e818 6px,#108040 6px)"></div><div class="abs" style="left:278px;top:480px;width:6px;height:7px;background:linear-gradient(#108040 0,#108040 1px,#88d098 1px,#50d060 3px,#10e818 3.5px,#10e818 6px,#108040 6px)"></div><div class="abs" style="left:285px;top:480px;width:6px;height:7px;background:linear-gradient(#108040 0,#108040 1px,#88d098 1px,#50d060 3px,#10e818 3.5px,#10e818 6px,#108040 6px)"></div><div class="abs" style="left:292px;top:480px;width:6px;height:7px;background:linear-gradient(#108040 0,#108040 1px,#88d098 1px,#50d060 3px,#10e818 3.5px,#10e818 6px,#108040 6px)"></div><div class="abs" style="left:299px;top:480px;width:6px;height:7px;background:linear-gradient(#108040 0,#108040 1px,#88d098 1px,#50d060 3px,#10e818 3.5px,#10e818 6px,#108040 6px)"></div><div class="abs" style="left:306px;top:480px;width:6px;height:7px;background:linear-gradient(#108040 0,#108040 1px,#88d098 1px,#50d060 3px,#10e818 3.5px,#10e818 6px,#108040 6px)"></div><div class="abs" style="left:313px;top:480px;width:6px;height:7px;background:linear-gradient(#108040 0,#108040 1px,#88d098 1px,#50d060 3px,#10e818 3.5px,#10e818 6px,#108040 6px)"></div><div class="abs" style="left:320px;top:480px;width:6px;height:7px;background:linear-gradient(#108040 0,#108040 1px,#88d098 1px,#50d060 3px,#10e818 3.5px,#10e818 6px,#108040 6px)"></div><div class="abs" style="left:327px;top:480px;width:6px;height:7px;background:linear-gradient(#108040 0,#108040 1px,#88d098 1px,#50d060 3px,#10e818 3.5px,#10e818 6px,#108040 6px)"></div><div class="abs" style="left:334px;top:480px;width:6px;height:7px;background:linear-gradient(#108040 0,#108040 1px,#88d098 1px,#50d060 3px,#10e818 3.5px,#10e818 6px,#108040 6px)"></div><div class="abs" style="left:341px;top:480px;width:6px;height:7px;background:linear-gradient(#108040 0,#108040 1px,#88d098 1px,#50d060 3px,#10e818 3.5px,#10e818 6px,#108040 6px)"></div><div class="abs" style="left:348px;top:480px;width:6px;height:7px;background:linear-gradient(#108040 0,#108040 1px,#88d098 1px,#50d060 3px,#10e818 3.5px,#10e818 6px,#108040 6px)"></div><div class="abs" style="left:355px;top:480px;width:6px;height:7px;background:linear-gradient(#108040 0,#108040 1px,#88d098 1px,#50d060 3px,#10e818 3.5px,#10e818 6px,#108040 6px)"></div><div class="abs" style="left:362px;top:480px;width:6px;height:7px;background:linear-gradient(#108040 0,#108040 1px,#88d098 1px,#50d060 3px,#10e818 3.5px,#10e818 6px,#108040 6px)"></div><div class="abs" style="left:369px;top:480px;width:6px;height:7px;background:linear-gradient(#108040 0,#108040 1px,#88d098 1px,#50d060 3px,#10e818 3.5px,#10e818 6px,#108040 6px)"></div><div class="abs" style="left:376px;top:480px;width:6px;height:7px;background:linear-gradient(#108040 0,#108040 1px,#88d098 1px,#50d060 3px,#10e818 3.5px,#10e818 6px,#108040 6px)"></div><div class="abs" style="left:383px;top:480px;width:6px;height:7px;background:linear-gradient(#108040 0,#108040 1px,#88d098 1px,#50d060 3px,#10e818 3.5px,#10e818 6px,#108040 6px)"></div><div class="abs" style="left:390px;top:480px;width:6px;height:7px;background:linear-gradient(#108040 0,#108040 1px,#88d098 1px,#50d060 3px,#10e818 3.5px,#10e818 6px,#108040 6px)"></div><div class="abs" style="left:397px;top:480px;width:6px;height:7px;background:linear-gradient(#108040 0,#108040 1px,#88d098 1px,#50d060 3px,#10e818 3.5px,#10e818 6px,#108040 6px)"></div><div class="abs" style="left:404px;top:480px;width:6px;height:7px;background:linear-gradient(#108040 0,#108040 1px,#88d098 1px,#50d060 3px,#10e818 3.5px,#10e818 6px,#108040 6px)"></div><div class="abs" style="left:411px;top:480px;width:6px;height:7px;background:linear-gradient(#108040 0,#108040 1px,#88d098 1px,#50d060 3px,#10e818 3.5px,#10e818 6px,#108040 6px)"></div><div class="abs" style="left:418px;top:480px;width:6px;height:7px;background:linear-gradient(#108040 0,#108040 1px,#88d098 1px,#50d060 3px,#10e818 3.5px,#10e818 6px,#108040 6px)"></div><div class="abs" style="left:425px;top:480px;width:6px;height:7px;background:linear-gradient(#108040 0,#108040 1px,#88d098 1px,#50d060 3px,#10e818 3.5px,#10e818 6px,#108040 6px)"></div><div class="abs" style="left:432px;top:480px;width:6px;height:7px;background:linear-gradient(#108040 0,#108040 1px,#88d098 1px,#50d060 3px,#10e818 3.5px,#10e818 6px,#108040 6px)"></div><div class="abs" style="left:439px;top:480px;width:6px;height:7px;background:linear-gradient(#108040 0,#108040 1px,#88d098 1px,#50d060 3px,#10e818 3.5px,#10e818 6px,#108040 6px)"></div><div class="sbar" style="left:451px;width:58px"></div><div class="lbl num" style="left:455px;top:476px;font-size:11px;letter-spacing:-0.5px">100.0%</div><div class="sbar" style="left:514px;width:118px"></div><div class="lbl num" style="left:514px;width:118px;text-align:right;top:476px">56:13</div></body></html>
